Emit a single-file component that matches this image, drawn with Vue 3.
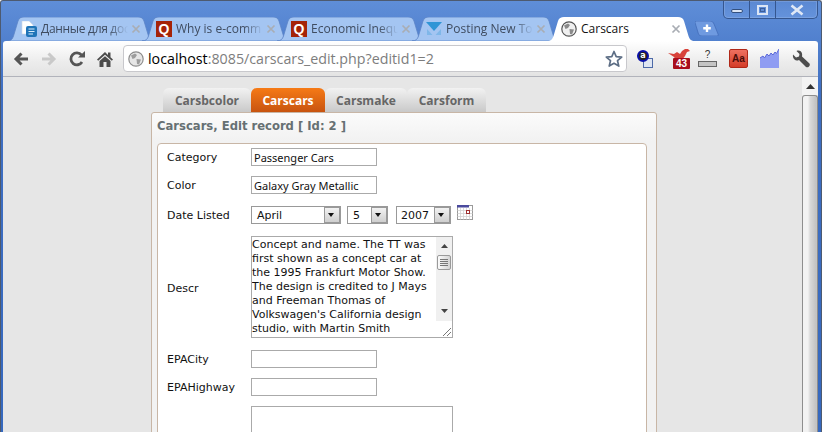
<script setup>
const tabs = [
  { title: 'Данные для дос', icon: 'doc', tight: true },
  { title: 'Why is e-comm', icon: 'q' },
  { title: 'Economic Inequ', icon: 'q' },
  { title: 'Posting New Top', icon: 'v' },
  { title: 'Carscars', icon: 'globe', active: true },
]
const pageTabs = [
  { label: 'Carsbcolor', w: 88 },
  { label: 'Carscars', w: 74, active: true },
  { label: 'Carsmake', w: 82 },
  { label: 'Carsform', w: 79 },
]
const descr = [
  'Concept and name. The TT was',
  'first shown as a concept car at',
  'the 1995 Frankfurt Motor Show.',
  'The design is credited to J Mays',
  'and Freeman Thomas of',
  "Volkswagen's California design",
  'studio, with Martin Smith',
]
</script>

<template>
  <div class="window">
    <div class="titlebar">
      <div class="tabs">
        <div v-for="t in tabs" :key="t.title" class="tab" :class="{ active: t.active }">
          <svg class="tab-shape" viewBox="0 0 148 24" width="148" height="24">
            <path d="M0 24C4 24 5.5 22 6.5 19L11 4C12 1 14 0 17 0H131C134 0 136 1 137 4L141.5 19C142.5 22 144 24 148 24Z" />
          </svg>
          <span class="fav">
            <svg v-if="t.icon === 'doc'" viewBox="0 0 16 16" width="16" height="16">
              <path d="M1 0H8L12 4V13H1Z" fill="#fff" stroke="#cfd6e2" stroke-width=".6" />
              <rect x="5" y="5" width="11" height="11" rx="2" fill="#1f74b8" />
              <path d="M7.5 8H13.5M7.5 10.5H13.5M7.5 13H12" stroke="#d7ecfb" stroke-width="1.2" />
            </svg>
            <span v-else-if="t.icon === 'q'" class="q">Q</span>
            <svg v-else-if="t.icon === 'v'" viewBox="0 0 16 16" width="16" height="16">
              <path d="M0 1H16L8 10Z" fill="#2f95d6" />
              <path d="M1 8L6.500 14H1ZM15 8L9.500 14H15Z" fill="#6fb0e6" opacity=".7" />
            </svg>
            <svg v-else viewBox="0 0 16 16" width="16" height="16">
              <circle cx="8" cy="8" r="7.2" fill="#f0f0f0" stroke="#555" stroke-width="1.2" />
              <path d="M3 4.500L7 2.500L9 4L7 7L4.500 8ZM8.500 8L13 8.500L11 13.500L9 13Z" fill="#8a8a8a" />
            </svg>
          </span>
          <span class="tab-title" :class="{ tight: t.tight }">{{ t.title }}</span>
          <svg class="tab-close" viewBox="0 0 10 10" width="10" height="10">
            <path d="M1.5 1.5L8.5 8.5M8.5 1.5L1.5 8.5" stroke="#a9adb4" stroke-width="1.7" />
          </svg>
        </div>
        <div class="newtab">
          <svg viewBox="0 0 24 15" width="24" height="15">
            <path d="M0 1.500C0 .5 1 0 2 0H15C17 0 18 1 19 3L23 13C23.500 14 23 15 22 15H7C5 15 4 14 3.500 13Z" fill="#6f9ae0" stroke="#3f69b4" stroke-width=".7" />
            <path d="M12 3.500V11M8.200 7.300H15.800" stroke="#fff" stroke-width="2.400" />
          </svg>
        </div>
      </div>
      <div class="controls">
        <div class="ctl w-min"><span class="min-bar"></span></div>
        <div class="ctl w-max"><span class="max-box"></span></div>
        <div class="ctl w-close">
          <svg viewBox="0 0 16 12" width="16" height="12">
            <path d="M2.500 1.500L13.500 10.500M13.500 1.500L2.500 10.500" stroke="#dfe8f6" stroke-width="2.600" />
          </svg>
        </div>
      </div>
    </div>

    <div class="toolbar">
      <svg class="nav" viewBox="0 0 16 16" width="16" height="16">
        <path d="M15 8H3M8.500 2.500L3 8L8.500 13.500" fill="none" stroke="#555" stroke-width="3" />
      </svg>
      <svg class="nav" viewBox="0 0 16 16" width="16" height="16">
        <path d="M1 8H13M7.500 2.500L13 8L7.500 13.500" fill="none" stroke="#c9c9c9" stroke-width="3" />
      </svg>
      <svg class="nav" viewBox="0 0 16 16" width="16" height="16">
        <path d="M13 11A6 6 0 1 1 12.500 4" fill="none" stroke="#555" stroke-width="2.800" />
        <path d="M9 6.500H16V0Z" fill="#555" />
      </svg>
      <svg class="nav" viewBox="0 0 16 16" width="16" height="16">
        <path d="M8 1L0 8.500L1.200 9.800L8 3.800L14.800 9.800L16 8.500L13.500 6.200V1.500H11V4Z M2.500 10L8 5.200L13.500 10V16H9.500V11H6.500V16H2.500Z" fill="#4c4c4c" />
      </svg>
      <div class="omnibox">
        <svg viewBox="0 0 16 16" width="16" height="16">
          <circle cx="8" cy="8" r="7.200" fill="#e6e6e6" stroke="#8d8d8d" stroke-width="1.200" />
          <path d="M3 4.500L7 2.500L9 4L7 7L4.500 8ZM8.500 8L13 8.500L11 13.500L9 13Z" fill="#9c9c9c" />
        </svg>
        <span class="url"><b>localhost</b>:8085/carscars_edit.php?editid1=2</span>
        <svg class="star" viewBox="0 0 18 18" width="18" height="18">
          <path d="M9 1.500L11.200 6.600L16.700 7.100L12.500 10.700L13.800 16.100L9 13.300L4.200 16.100L5.500 10.700L1.300 7.100L6.800 6.600Z" fill="#fff" stroke="#5d6e85" stroke-width="1.700" stroke-linejoin="round" />
        </svg>
      </div>
      <div class="ext e1">
        <span class="e1-doc"></span>
        <span class="e1-a">a</span>
      </div>
      <div class="ext e2">
        <svg viewBox="0 0 22 12" width="22" height="12">
          <path d="M0 5L6 6L9 4L12 6L14 3L17 1L20 1L22 3L19 4L17 8L14 12H8L6 9Z" fill="#d8423a" />
        </svg>
        <span class="badge">43</span>
      </div>
      <div class="ext e3">
        <span class="qm">?</span>
        <span class="qbar"></span>
      </div>
      <div class="ext e4">Aa</div>
      <svg class="ext e5" viewBox="0 0 19 19" width="19" height="19">
        <path d="M0 9L3 7L4.500 9L7 5L9 7L11 4L13 6L15 3L16.500 4.500L19 0V19H0Z" fill="#8f9cf2" />
        <path d="M0 9L3 7L4.500 9L7 5L9 7L11 4L13 6L15 3L16.500 4.500L19 0" fill="none" stroke="#5a68d8" />
      </svg>
      <svg class="ext e6" viewBox="0 0 18 18" width="18" height="18">
        <path d="M1 4.500L4 7.500L7 6.500L7.500 4L4.500 1C7 0 9.500 1 10 3.500C10.300 5 10 6 10 6.500L17.500 13.500C18 14.500 18 15.500 17 16.500C16 17.500 15 17.500 14 17L7 10C5 11 3.500 10.500 2.500 9.500C1.200 8.200 .6 6.500 1 4.500Z" fill="#4d4d4d" />
      </svg>
    </div>

    <div class="viewport">
      <div class="page">
        <nav class="page-tabs">
          <a v-for="p in pageTabs" :key="p.label" class="page-tab" :class="{ on: p.active }" :style="{ width: p.w + 'px' }">{{ p.label }}</a>
        </nav>
        <section class="panel">
          <h1 class="panel-title">Carscars, Edit record [ Id: 2 ]</h1>
          <div class="form">
            <div class="row">
              <label>Category</label>
              <input class="field" value="Passenger Cars" readonly />
            </div>
            <div class="row">
              <label>Color</label>
              <input class="field" value="Galaxy Gray Metallic" readonly />
            </div>
            <div class="row tall">
              <label>Date Listed</label>
              <div class="select s-month"><span>April</span><i class="drop"></i></div>
              <div class="select s-day"><span>5</span><i class="drop"></i></div>
              <div class="select s-year"><span>2007</span><i class="drop"></i></div>
              <svg class="cal" viewBox="0 0 16 15" width="16" height="15">
                <rect x=".5" y=".5" width="15" height="14" fill="#fff" stroke="#9a9a9a" />
                <rect x="0" y="0" width="12" height="2.500" fill="#4a4a9e" />
                <path d="M.5 5.500H15.500M.5 8.500H15.500M.5 11.500H15.500M3.500 3V14.500M6.500 3V14.500M9.500 3V14.500M12.500 3V14.500" stroke="#d3d3d3" stroke-width=".8" />
                <rect x="9.500" y="5.500" width="3" height="3" fill="#fff" stroke="#a03030" />
              </svg>
            </div>
            <div class="row tall">
              <label class="descr-label">Descr</label>
              <div class="area">
                <div class="area-text">
                  <div v-for="l in descr" :key="l">{{ l }}</div>
                </div>
                <div class="area-bar">
                  <svg class="up" viewBox="0 0 7 4" width="7" height="4"><path d="M3.500 0L7 4H0Z" fill="#444" /></svg>
                  <div class="area-thumb"><i></i><i></i><i></i><i></i></div>
                  <svg class="down" viewBox="0 0 7 4" width="7" height="4"><path d="M0 0H7L3.500 4Z" fill="#444" /></svg>
                  <div class="grip">
                    <svg viewBox="0 0 10 10" width="10" height="10"><path d="M1 9L9 1M5 9L9 5" stroke="#777" /></svg>
                  </div>
                </div>
              </div>
            </div>
            <div class="row tall">
              <label>EPACity</label>
              <input class="field" readonly />
            </div>
            <div class="row">
              <label>EPAHighway</label>
              <input class="field" readonly />
            </div>
            <div class="row">
              <label></label>
              <div class="area empty"></div>
            </div>
          </div>
        </section>
      </div>
      <div class="scrollbar">
        <div class="sb-up">
          <svg viewBox="0 0 9 5" width="9" height="5"><path d="M4.500 0L9 5H0Z" fill="#333" /></svg>
        </div>
        <div class="sb-thumb"></div>
      </div>
    </div>
  </div>
</template>

<style scoped>
.window {
  box-sizing: border-box;
  width: 822px;
  height: 432px;
  overflow: hidden;
  display: flex;
  flex-direction: column;
  border: 1px solid #4d5a70;
  border-bottom: 0;
  border-radius: 3px 3px 0 0;
  background: linear-gradient(#5f8ed8, #3f6fc2 90px, #3568be);
  font-family: "DejaVu Sans", sans-serif;
}
.titlebar {
  flex: none;
  height: 40px;
  display: flex;
  justify-content: space-between;
  padding-left: 6px;
  padding-right: 3px;
}
.tabs {
  display: flex;
  align-items: flex-end;
}
.tab {
  position: relative;
  width: 148px;
  height: 24px;
  margin-right: -13px;
  display: flex;
  align-items: center;
  padding-left: 14px;
  box-sizing: border-box;
  color: #3f4c60;
  font: 12px/16px "Open Sans", sans-serif;
}
.tab-shape {
  position: absolute;
  left: 0;
  top: 0;
  fill: #a4c5f2;
  stroke: #5c84c6;
  stroke-width: 0.8;
}
.tab.active {
  color: #111;
  z-index: 2;
}
.tab.active .tab-shape {
  fill: #fff;
  stroke: none;
}
.fav,
.tab-title,
.tab-close {
  position: relative;
}
.fav {
  width: 16px;
  height: 16px;
  flex: none;
  display: flex;
}
.q {
  width: 16px;
  height: 16px;
  background: #a52308;
  color: #fff;
  font: bold 14px/16px "Liberation Sans", sans-serif;
  text-align: center;
}
.tab-title {
  width: 87px;
  margin-left: 4px;
  flex: none;
  white-space: nowrap;
  -webkit-mask-image: linear-gradient(90deg, #000 78%, transparent);
  mask-image: linear-gradient(90deg, #000 78%, transparent);
}
.tab-title.tight {
  letter-spacing: -0.3px;
}
.active .tab-title {
  -webkit-mask-image: none;
  mask-image: none;
}
.tab-close {
  margin-left: 3px;
  flex: none;
}
.newtab {
  margin-left: 13px;
  margin-bottom: 5px;
  height: 15px;
  display: flex;
}
.controls {
  display: flex;
  height: 18px;
  box-sizing: border-box;
  border: 1px solid #35568f;
  border-top: 0;
  border-radius: 0 0 5px 5px;
  background: linear-gradient(#5a88d2, #6593dc);
  box-shadow: inset 0 0 0 1px rgba(255, 255, 255, 0.14);
}
.ctl {
  display: flex;
  align-items: center;
  justify-content: center;
  border-left: 1px solid #35568f;
}
.ctl:first-child {
  border-left: 0;
}
.w-min { width: 25px; }
.w-max { width: 25px; }
.w-close { width: 41px; }
.min-bar {
  width: 12px;
  height: 4px;
  margin-top: 3px;
  background: #dbe5f5;
  border: 1px solid #33507f;
  border-radius: 2px;
  box-sizing: border-box;
}
.max-box {
  width: 11px;
  height: 10px;
  box-sizing: border-box;
  border: 2px solid #dbe5f5;
  outline: 1px solid #3d5f9a;
  outline-offset: -4px;
}
.toolbar {
  flex: none;
  height: 36px;
  margin: 0 3px 0 2px;
  box-sizing: border-box;
  border-bottom: 1px solid #b1b3bb;
  border-radius: 3px 3px 0 0;
  background: linear-gradient(#fff, #ececec 60%, #e3e3e3);
  display: flex;
  align-items: center;
  padding-left: 10px;
  position: relative;
}
.nav {
  flex: none;
  margin-right: 12px;
}
.nav:nth-child(4) {
  margin-right: 10px;
}
.omnibox {
  width: 504px;
  height: 27px;
  box-sizing: border-box;
  background: #fff;
  border: 1px solid #c8c8cc;
  border-radius: 4px;
  display: flex;
  align-items: center;
  padding: 0 3px 0 4px;
  flex: none;
}
.url {
  margin-left: 4px;
  flex: 1;
  color: #7d7d7d;
  font: 14.25px/20px "Open Sans", sans-serif;
  white-space: nowrap;
}
.url b {
  font-weight: 400;
  color: #000;
}
.ext { flex: none; }
.e1 {
  width: 16px;
  height: 18px;
  margin-left: 10px;
  position: relative;
}
.e1-doc {
  position: absolute;
  right: 0;
  bottom: 0;
  width: 10px;
  height: 10px;
  box-sizing: border-box;
  background: #dfe6f2;
  border: 1px solid #4d6aa8;
}
.e1-a {
  position: absolute;
  left: 0;
  top: 0;
  width: 12px;
  height: 12px;
  border-radius: 50%;
  box-sizing: border-box;
  background: #222;
  border: 2px solid #0a10a8;
  color: #fff;
  font: bold 8px/7px "DejaVu Sans", sans-serif;
  text-align: center;
}
.e2 {
  width: 22px;
  height: 22px;
  margin-left: 15px;
  display: flex;
  flex-direction: column;
  align-items: flex-end;
}
.badge {
  width: 17px;
  height: 11px;
  margin-top: -2px;
  background: #a80e1c;
  border-radius: 1px;
  color: #fff;
  font: bold 10px/11px "Liberation Sans", sans-serif;
  text-align: center;
}
.e3 {
  width: 19px;
  height: 17px;
  margin-left: 8px;
  display: flex;
  flex-direction: column;
  align-items: center;
}
.qm {
  font: 10px/10px "Liberation Sans", sans-serif;
  color: #333;
}
.qbar {
  width: 19px;
  height: 6px;
  margin-top: 1px;
  box-sizing: border-box;
  background: #c4c4c4;
  border: 1px solid #666;
}
.e4 {
  width: 19px;
  height: 19px;
  margin-left: 12px;
  box-sizing: border-box;
  background: linear-gradient(#ee7060, #d43c28);
  border: 1px solid #b02818;
  border-radius: 2px;
  color: #4a0c08;
  font: bold 10px/17px "Liberation Sans", sans-serif;
  text-align: center;
}
.e5 { margin-left: 12px; }
.e6 { margin-left: 13px; }
.viewport {
  flex: 1;
  min-height: 0;
  margin: 0 3px 0 2px;
  display: flex;
  background: #e6e6e6;
}
.page {
  flex: 1;
  min-width: 0;
  padding-top: 11px;
}
.page-tabs {
  display: flex;
  margin-left: 160px;
  height: 24px;
}
.page-tab {
  box-sizing: border-box;
  text-align: center;
  border-radius: 6px 6px 0 0;
  background: linear-gradient(#f2f2f2, #c9c9c9);
  color: #666;
  font: bold 12px/25px "Open Sans", sans-serif;
}
.page-tab.on {
  background: linear-gradient(#f67a16, #c85410);
  color: #fff;
}
.panel {
  margin-left: 148px;
  width: 506px;
  height: 330px;
  box-sizing: border-box;
  border: 1px solid #c8b6a6;
  border-radius: 3px 3px 0 0;
  background: linear-gradient(#fbfbfb, #f2f2f2 28px);
  padding: 0 9px 0 5px;
}
.panel-title {
  margin: 0;
  height: 30px;
  color: #667073;
  font: bold 11.6px/26px "DejaVu Sans", sans-serif;
}
.form {
  box-sizing: border-box;
  height: 300px;
  background: #fff;
  border: 1px solid #c8b6a6;
  border-radius: 4px 4px 0 0;
  padding: 4px 0 0 9px;
  font-size: 11px;
  color: #111;
}
.row {
  display: flex;
  align-items: center;
  margin-top: 10px;
}
.row:first-child {
  margin-top: 0;
}
.row.tall {
  margin-top: 12px;
}
.row label {
  width: 84px;
  flex: none;
}
.row .descr-label {
  padding-top: 2px;
}
.field {
  width: 126px;
  height: 18px;
  box-sizing: border-box;
  border: 1px solid #aaa;
  padding: 0 2px;
  font: 11px "Noto Sans", sans-serif;
  color: #111;
  background: #fff;
  outline: none;
}
.select {
  height: 18px;
  box-sizing: border-box;
  border: 1px solid #999;
  display: flex;
  align-items: center;
  justify-content: space-between;
  padding-left: 5px;
  background: #fff;
}
.s-month { width: 90px; }
.s-day { width: 41px; margin-left: 6px; }
.s-year { width: 55px; margin-left: 8px; padding-left: 4px; }
.drop {
  width: 16px;
  height: 16px;
  flex: none;
  box-sizing: border-box;
  border: 1px solid #fff;
  border-left-color: #999;
  outline: 1px solid #999;
  outline-offset: -1px;
  background: linear-gradient(#f2f2f2, #cfcfcf);
  position: relative;
}
.drop::after {
  content: "";
  position: absolute;
  left: 3px;
  top: 5px;
  border: 3.5px solid transparent;
  border-top: 4px solid #111;
  border-bottom: 0;
}
.cal {
  margin-left: 6px;
  align-self: flex-start;
  margin-top: -1px;
}
.area {
  width: 202px;
  height: 102px;
  box-sizing: border-box;
  border: 1px solid #aaa;
  display: flex;
  background: #fff;
}
.area-text {
  flex: 1;
  min-width: 0;
  padding: 1px 0 0;
  line-height: 14px;
  white-space: nowrap;
  overflow: hidden;
}
.area-bar {
  width: 16px;
  flex: none;
  background: #f0f0f0;
  display: flex;
  flex-direction: column;
  align-items: center;
  position: relative;
}
.up {
  margin-top: 7px;
}
.down {
  margin-top: 39px;
}
.area-thumb {
  width: 14px;
  height: 15px;
  margin-top: 7px;
  flex: none;
  box-sizing: border-box;
  border: 1px solid #9a9a9a;
  border-radius: 2px;
  background: linear-gradient(90deg, #fbfbfb, #d4d4d4);
  display: flex;
  flex-direction: column;
  align-items: center;
  justify-content: center;
  gap: 1px;
}
.area-thumb i {
  width: 8px;
  height: 1px;
  background: #777;
}
.grip {
  position: absolute;
  left: 0;
  bottom: 0;
  right: 0;
  height: 16px;
  background: #fff;
  display: flex;
  align-items: flex-end;
  justify-content: flex-end;
}
.empty {
  height: 60px;
}
.scrollbar {
  width: 17px;
  flex: none;
  display: flex;
  flex-direction: column;
  background: #f1f1f1;
  border-left: 1px solid #e6e6e6;
  box-sizing: border-box;
}
.sb-up {
  height: 18px;
  display: flex;
  align-items: center;
  justify-content: center;
  background: #f3f3f3;
}
.sb-thumb {
  flex: 1;
  box-sizing: border-box;
  border: 1px solid #8d8d8d;
  border-bottom: 0;
  border-radius: 3px 3px 0 0;
  background: linear-gradient(90deg, #f2f2f2 35%, #dadada 50%, #c4c4c4 90%);
}
</style>
